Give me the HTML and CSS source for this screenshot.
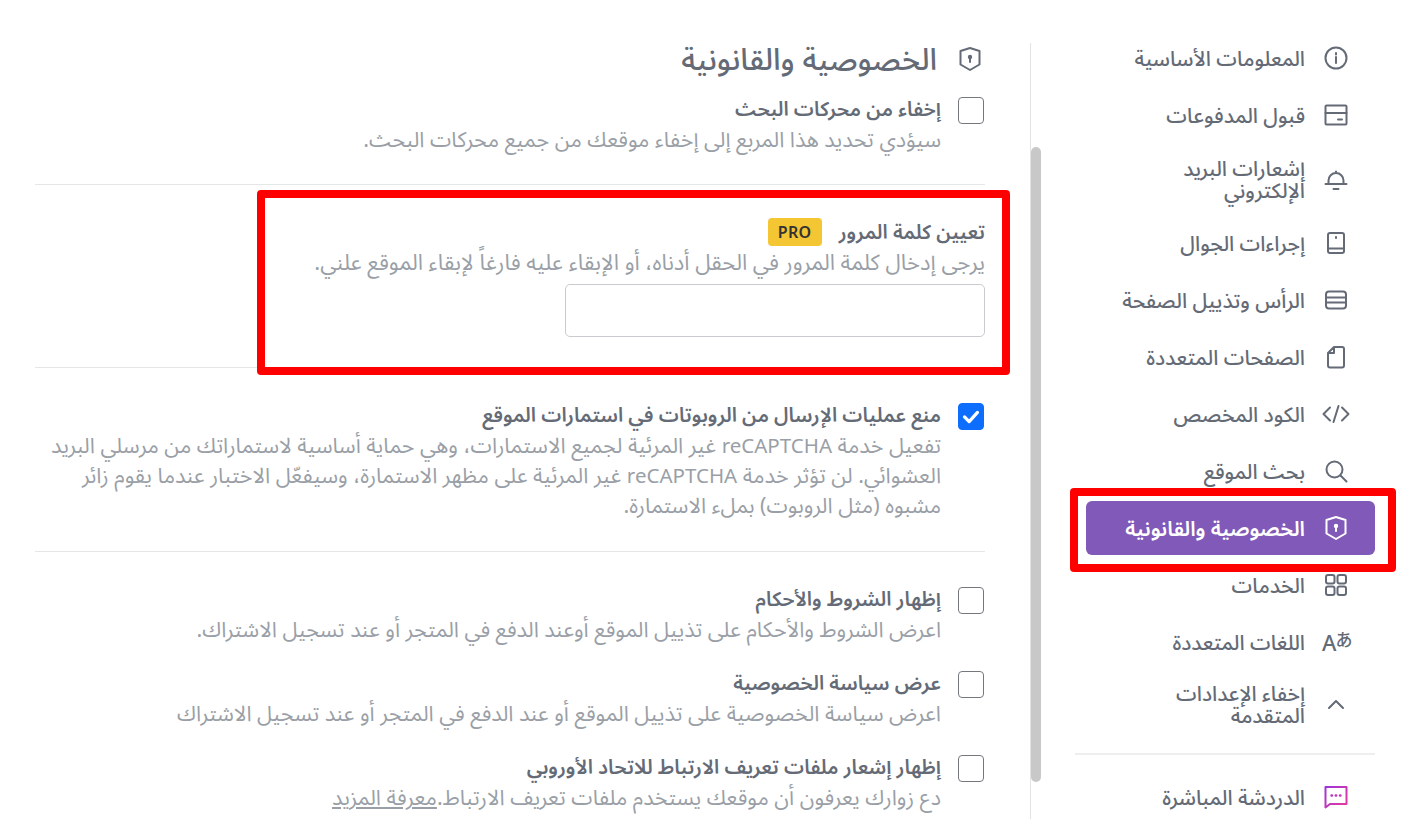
FILE: index.html
```html
<!DOCTYPE html>
<html lang="ar" dir="rtl">
<head>
  <meta charset="utf-8">
  <title>الخصوصية والقانونية</title>
  <link rel="stylesheet" href="styles.css">
</head>
<body>
  <div class="page">
    <!-- Sidebar -->
    <nav class="sidebar">
      <a class="nav-item">
        <svg class="nav-icon" viewBox="0 0 24 24"><circle cx="12" cy="12" r="10.5"/><path d="M12 11v6M12 7v1.6"/></svg>
        <span>المعلومات الأساسية</span>
      </a>
      <a class="nav-item">
        <svg class="nav-icon" viewBox="0 0 24 24"><rect x="1.500" y="2.500" width="21" height="19" rx="1"/><path d="M1.500 10h21M14 16.500h4"/></svg>
        <span>قبول المدفوعات</span>
      </a>
      <a class="nav-item">
        <svg class="nav-icon" viewBox="0 0 24 24"><path d="M1.500 17h21M4.500 17v-3.500a7.500 7.500 0 0 1 15 0V17M12 6V4.500M9.500 22h5"/></svg>
        <span>إشعارات البريد الإلكتروني</span>
      </a>
      <a class="nav-item">
        <svg class="nav-icon" viewBox="0 0 24 24"><rect x="4" y="2" width="16" height="20" rx="2"/><path d="M4 17.500h16M12 6v1"/></svg>
        <span>إجراءات الجوال</span>
      </a>
      <a class="nav-item">
        <svg class="nav-icon" viewBox="0 0 24 24"><rect x="2" y="3.500" width="20" height="17" rx="3"/><path d="M2 9.500h20M2 14.500h20"/></svg>
        <span>الرأس وتذييل الصفحة</span>
      </a>
      <a class="nav-item">
        <svg class="nav-icon" viewBox="0 0 24 24"><path d="M10 2h8a2 2 0 0 1 2 2v16.500a2 2 0 0 1-2 2H6a2 2 0 0 1-2-2V8zM10 2v6H4"/></svg>
        <span>الصفحات المتعددة</span>
      </a>
      <a class="nav-item">
        <svg class="nav-icon nav-icon-wide" viewBox="0 0 28 24"><path d="M8 5.500L1.500 12 8 18.500M20 5.500l6.500 6.500-6.500 6.500M16.500 4l-5 16"/></svg>
        <span>الكود المخصص</span>
      </a>
      <a class="nav-item">
        <svg class="nav-icon" viewBox="0 0 24 24"><circle cx="10.500" cy="10.500" r="8"/><path d="M16.500 16.500l6 6"/></svg>
        <span>بحث الموقع</span>
      </a>
      <a class="nav-item active">
        <svg class="nav-icon" viewBox="0 0 24 24"><path d="M12 1l9.500 3v13.500L12 23l-9.500-5.500V4z"/><circle class="dot" cx="12" cy="10" r="2.200"/><path d="M12 10v5"/></svg>
        <span>الخصوصية والقانونية</span>
      </a>
      <a class="nav-item">
        <svg class="nav-icon" viewBox="0 0 24 24"><rect x="2" y="2" width="8.500" height="8.500" rx="2"/><rect x="13.500" y="2" width="8.500" height="8.500" rx="2"/><rect x="2" y="13.500" width="8.500" height="8.500" rx="2"/><rect x="13.500" y="13.500" width="8.500" height="8.500" rx="2"/></svg>
        <span>الخدمات</span>
      </a>
      <a class="nav-item">
        <span class="lang-icon">A<i>あ</i></span>
        <span>اللغات المتعددة</span>
      </a>
      <a class="nav-item nav-toggle">
        <svg class="nav-icon" viewBox="0 0 24 24"><path d="M5 16l7-7 7 7"/></svg>
        <span>إخفاء الإعدادات المتقدمة</span>
      </a>
      <div class="nav-divider"></div>
      <a class="nav-item">
        <svg class="nav-icon chat-icon" viewBox="0 0 24 24">
          <defs><linearGradient id="chatGrad" gradientUnits="userSpaceOnUse" x1="1" y1="2" x2="23" y2="23"><stop offset="0" stop-color="#9b35d8"/><stop offset="1" stop-color="#ec3a9c"/></linearGradient></defs>
          <path stroke="url(#chatGrad)" d="M1.500 2h21v17H6l-4.500 3.500z"/>
          <path class="chat-dots" stroke="url(#chatGrad)" d="M7.500 10.500h.5M11.700 10.500h.5M16 10.500h.5"/>
        </svg>
        <span>الدردشة المباشرة</span>
      </a>
    </nav>

    <!-- Settings panel -->
    <main class="panel">
      <h1 class="panel-title">
        <svg class="title-icon" viewBox="0 0 24 24"><path d="M12 1l9.500 3v13.500L12 23l-9.500-5.500V4z"/><circle class="dot" cx="12" cy="10" r="2.200"/><path d="M12 10v5"/></svg>
        الخصوصية والقانونية
      </h1>

      <section class="group group-first">
        <div class="check-row">
          <span class="checkbox"></span>
          <div>
            <div class="label">إخفاء من محركات البحث</div>
            <p class="desc">سيؤدي تحديد هذا المربع إلى إخفاء موقعك من جميع محركات البحث.</p>
          </div>
        </div>
      </section>

      <section class="group group-password">
        <div class="label-line">
          <span class="label">تعيين كلمة المرور</span>
          <span class="pro-badge">PRO</span>
        </div>
        <p class="desc">يرجى إدخال كلمة المرور في الحقل أدناه، أو الإبقاء عليه فارغاً لإبقاء الموقع علني.</p>
        <input class="text-input" type="text">
      </section>

      <section class="group group-captcha">
        <div class="check-row">
          <span class="checkbox checked">
            <svg viewBox="0 0 26 26"><path d="M6 13.500l5 5 9-10"/></svg>
          </span>
          <div>
            <div class="label">منع عمليات الإرسال من الروبوتات في استمارات الموقع</div>
            <p class="desc">تفعيل خدمة <span class="latin">reCAPTCHA</span> غير المرئية لجميع الاستمارات، وهي حماية أساسية لاستماراتك من مرسلي البريد العشوائي. لن تؤثر خدمة <span class="latin">reCAPTCHA</span> غير المرئية على مظهر الاستمارة، وسيفعّل الاختبار عندما يقوم زائر مشبوه (مثل الروبوت) بملء الاستمارة.</p>
          </div>
        </div>
      </section>

      <section class="group group-last">
        <div class="check-row">
          <span class="checkbox"></span>
          <div>
            <div class="label">إظهار الشروط والأحكام</div>
            <p class="desc">اعرض الشروط والأحكام على تذييل الموقع أوعند الدفع في المتجر أو عند تسجيل الاشتراك.</p>
          </div>
        </div>
        <div class="check-row">
          <span class="checkbox"></span>
          <div>
            <div class="label">عرض سياسة الخصوصية</div>
            <p class="desc">اعرض سياسة الخصوصية على تذييل الموقع أو عند الدفع في المتجر أو عند تسجيل الاشتراك</p>
          </div>
        </div>
        <div class="check-row">
          <span class="checkbox"></span>
          <div>
            <div class="label">إظهار إشعار ملفات تعريف الارتباط للاتحاد الأوروبي</div>
            <p class="desc">دع زوارك يعرفون أن موقعك يستخدم ملفات تعريف الارتباط.<a class="more-link">معرفة المزيد</a></p>
          </div>
        </div>
      </section>

      <div class="scroll-thumb"></div>
    </main>

    <!-- Red annotation frames -->
    <div class="mark mark-password"></div>
    <div class="mark mark-nav"></div>
  </div>
</body>
</html>
```
FILE: styles.css
```css
* {
  box-sizing: border-box;
}

html, body {
  margin: 0;
  height: 100%;
  overflow: hidden;
  background: white;
}

body {
  font-family: "Noto Sans", "Noto Sans Arabic", "DejaVu Sans", sans-serif;
  color: #646b76;
}

.page {
  position: relative;
  display: flex;
  height: 819px;
  overflow: hidden;
}

/* Sidebar */
.sidebar {
  flex: none;
  width: 300px;
  margin-right: 46px;
  padding-top: 31px;
}

.nav-item {
  display: flex;
  align-items: center;
  gap: 19px;
  min-height: 54px;
  margin: 0 0 3px 11px;
  padding: 12px 27px;
  border-radius: 6px;
  font-size: 20.700px;
  line-height: 22px;
  font-weight: 500;
}

.nav-item.active {
  background: #8159b8;
  color: white;
  font-size: 20.700px;
  font-weight: 600;
}

.nav-toggle {
  padding-top: 9px;
  padding-bottom: 9px;
  min-height: 63px;
}

.nav-icon {
  flex: none;
  width: 24px;
  height: 24px;
  fill: none;
  stroke: currentColor;
  stroke-width: 2;
  stroke-linecap: round;
  stroke-linejoin: round;
}

.nav-icon-wide {
  width: 28px;
  margin: 0 -2px;
}

.chat-dots {
  stroke-width: 2.400;
}

.dot {
  fill: currentColor;
  stroke: none;
}

.lang-icon {
  flex: none;
  display: flex;
  width: 28px;
  margin: 0 -2px;
  direction: ltr;
  font-size: 22px;
  line-height: 24px;
}

.lang-icon i {
  font-family: "Noto Sans CJK JP", sans-serif;
  font-style: normal;
  font-size: 17px;
  margin: -3px 0 0 -1px;
}

.nav-divider {
  height: 2px;
  margin: 18px 0 15px;
  background: #eeeeee;
}

/* Settings panel */
.panel {
  position: relative;
  flex: none;
  width: 996px;
  margin-top: 43px;
  margin-right: 44px;
  padding: 0 45px 0 0;
  border-right: 1px solid #e3e3e3;
}

.panel-title {
  display: flex;
  align-items: center;
  gap: 21px;
  margin: 0;
  padding-right: 3px;
  height: 32px;
  font-size: 30.400px;
  line-height: 32px;
  font-weight: 500;
}

.title-icon {
  flex: none;
  width: 24px;
  height: 24px;
  fill: none;
  stroke: currentColor;
  stroke-width: 2;
  stroke-linejoin: round;
  stroke-linecap: round;
}

.group {
  width: 950px;
  border-bottom: 1px solid #e5e6e8;
}

.group-first {
  padding-top: 22px;
  height: 110px;
}

.group-password {
  height: 183px;
  padding-top: 32px;
}

.group-captcha {
  height: 184px;
  padding-top: 35px;
}

.group-last {
  padding-top: 35px;
  border-bottom: none;
}

.check-row {
  display: flex;
  gap: 17px;
  margin-bottom: 27px;
  padding-right: 1px;
}

.checkbox {
  flex: none;
  width: 26px;
  height: 27px;
  border: 1px solid #74787e;
  border-radius: 4px;
  background: white;
}

.checkbox.checked {
  background: #0d6efd;
  border-color: #0d6efd;
}

.checkbox svg {
  display: block;
  width: 24px;
  height: 25px;
  fill: none;
  stroke: white;
  stroke-width: 3.500;
  stroke-linecap: round;
  stroke-linejoin: round;
}

.label {
  font-size: 20px;
  line-height: 23px;
  font-weight: 600;
}

.label-line {
  display: flex;
  align-items: center;
  gap: 17px;
}

.pro-badge {
  width: 54px;
  height: 28px;
  margin-top: 1px;
  border-radius: 4px;
  background: #f4c633;
  color: #333333;
  font-size: 16px;
  line-height: 28px;
  font-weight: 600;
  text-align: center;
  letter-spacing: .3px;
}

.desc {
  margin: 4px 0 0;
  font-size: 21.500px;
  line-height: 30px;
  color: #9a9fa7;
}

.group-password .desc {
  margin: -1px 0 0;
  font-size: 22px;
  line-height: 32px;
}

.latin {
  font-size: 20.500px;
}

.text-input {
  display: block;
  width: 420px;
  height: 53px;
  margin-top: 7px;
  border: 1px solid #c9cbd0;
  border-radius: 5px;
  background: white;
  outline: none;
}

.more-link {
  text-decoration: underline;
}

.scroll-thumb {
  position: absolute;
  top: 104px;
  right: -11px;
  width: 10px;
  height: 635px;
  border-radius: 5px;
  background: #c8c8c8;
}

/* Annotation frames */
.mark {
  position: absolute;
  border: 8px solid #ff0000;
  border-radius: 4px;
  pointer-events: none;
}

.mark-password {
  left: 257px;
  top: 190px;
  width: 753px;
  height: 185px;
}

.mark-nav {
  left: 1070px;
  top: 488px;
  width: 326px;
  height: 84px;
}
```
